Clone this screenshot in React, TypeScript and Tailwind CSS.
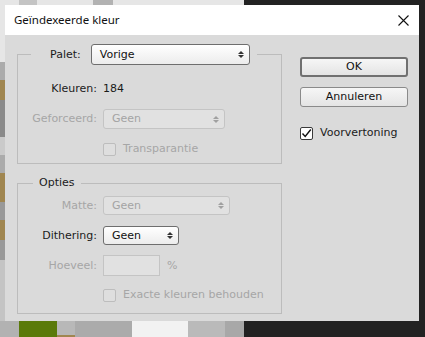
import React from "react";

const Arrows = ({ color }: { color: string }) => (
  <svg width="6" height="9" viewBox="0 0 6 9" className="shrink-0">
    <polygon points="0,4 3,1 6,4" fill={color} />
    <polygon points="0,5 3,8 6,5" fill={color} />
  </svg>
);

const Select = ({
  w,
  h,
  text,
  disabled,
}: {
  w: number;
  h: number;
  text: string;
  disabled?: boolean;
}) => (
  <div
    className={
      "flex items-center justify-between pl-[8px] pr-[5px] rounded-[3px] border " +
      (disabled
        ? "border-[#c4c4c4] bg-[#e1e1e1] text-[#a4a4a4]"
        : "border-[#6e6e6e] bg-gradient-to-b from-[#ffffff] to-[#ececec] text-[#111111]")
    }
    style={{ width: w, height: h }}
  >
    <span>{text}</span>
    <Arrows color={disabled ? "#a0a0a0" : "#333333"} />
  </div>
);

const Check = ({ checked, disabled }: { checked?: boolean; disabled?: boolean }) => (
  <div
    className={
      "w-[13px] h-[13px] rounded-[2px] border flex items-center justify-center shrink-0 " +
      (disabled ? "border-[#bdbdbd] bg-[#dedede]" : "border-[#3a3a3a] bg-white")
    }
  >
    {checked && (
      <svg width="11" height="11" viewBox="0 0 11 11">
        <polyline points="1.5,5.5 4.2,8.5 9.8,1.5" fill="none" stroke="#111" strokeWidth="1.4" />
      </svg>
    )}
  </div>
);

const Label = ({ children, disabled }: { children: React.ReactNode; disabled?: boolean }) => (
  <span className={"w-[79px] text-right shrink-0 " + (disabled ? "text-[#a6a6a6]" : "text-[#1a1a1a]")}>
    {children}
  </span>
);

export default function App() {
  return (
    <div className="relative w-[425px] h-[337px] overflow-hidden bg-[#e6e6e6]">
      <svg className="absolute inset-0" width="425" height="337" viewBox="0 0 425 337">
        <rect x="0" y="0" width="245" height="337" fill="#e6e6e6" />
        <rect x="244" y="0" width="181" height="337" fill="#222222" />
        <rect x="19" y="0" width="18" height="6" fill="#c4c4c4" />
        <rect x="93" y="0" width="20" height="6" fill="#b2b2b2" />
        <rect x="0" y="62" width="6" height="18" fill="#ababab" />
        <rect x="0" y="80" width="6" height="20" fill="#a08650" />
        <rect x="0" y="100" width="6" height="37" fill="#8a8a8a" />
        <rect x="0" y="137" width="6" height="18" fill="#cacaca" />
        <rect x="0" y="155" width="6" height="18" fill="#ababab" />
        <rect x="0" y="173" width="6" height="29" fill="#a08650" />
        <rect x="0" y="202" width="6" height="18" fill="#999999" />
        <rect x="0" y="220" width="6" height="20" fill="#a08650" />
        <rect x="0" y="240" width="6" height="20" fill="#999999" />
        <rect x="0" y="260" width="6" height="61" fill="#c4c4c4" />
        <rect x="0" y="321" width="19" height="16" fill="#b2b2b2" />
        <rect x="19" y="321" width="38" height="16" fill="#5a7a0a" />
        <rect x="57" y="321" width="18" height="16" fill="#b8b8b8" />
        <rect x="57" y="335" width="18" height="2" fill="#a08650" />
        <rect x="75" y="321" width="57" height="16" fill="#ababab" />
        <rect x="132" y="321" width="56" height="16" fill="#f2f2f2" />
        <rect x="188" y="321" width="37" height="16" fill="#bababa" />
        <rect x="225" y="321" width="19" height="16" fill="#a8a8a8" />
      </svg>

      <div
        className="absolute left-[5px] top-[5px] w-[414px] h-[316px] flex flex-col bg-[#dadada] text-[11px] leading-[16px] text-[#1a1a1a]"
        style={{ fontFamily: '"DejaVu Sans", sans-serif' }}
      >
        <div className="h-[30px] bg-white flex items-center justify-between pl-[9px] pr-[10px] shrink-0">
          <span className="text-[11.5px] text-[#111]" style={{ fontFamily: '"Noto Sans", sans-serif' }}>
            Geïndexeerde kleur
          </span>
          <svg width="11" height="11" viewBox="0 0 11 11">
            <path d="M0.5 0.5 L10.5 10.5 M10.5 0.5 L0.5 10.5" stroke="#111" strokeWidth="1.1" />
          </svg>
        </div>

        <div className="flex pl-[12px] pt-[9px] gap-[18px]">
          <div className="w-[265px] flex flex-col shrink-0">
            <fieldset className="border border-[#bcbcbc] pb-[6px]">
              <legend className="ml-[13px] pl-[19px] pr-[7px] flex items-center gap-[10px]">
                <span>Palet:</span>
                <Select w={159} h={21} text="Vorige" />
              </legend>
              <div className="flex items-center gap-[6px] mt-[16px]">
                <Label>Kleuren:</Label>
                <span>184</span>
              </div>
              <div className="flex items-center gap-[6px] mt-[12px]">
                <Label disabled>Geforceerd:</Label>
                <Select w={122} h={20} text="Geen" disabled />
              </div>
              <div className="flex items-center gap-[7px] mt-[12px] pl-[85px] text-[#a6a6a6]">
                <Check disabled />
                <span>Transparantie</span>
              </div>
            </fieldset>

            <fieldset className="border border-[#bcbcbc] pb-[10px] mt-[11px]">
              <legend className="ml-[15px] px-[6px]">Opties</legend>
              <div className="flex items-center gap-[6px] mt-[5px]">
                <Label disabled>Matte:</Label>
                <Select w={127} h={19} text="Geen" disabled />
              </div>
              <div className="flex items-center gap-[6px] mt-[11px]">
                <Label>Dithering:</Label>
                <Select w={76} h={19} text="Geen" />
              </div>
              <div className="flex items-center gap-[6px] mt-[10px]">
                <Label disabled>Hoeveel:</Label>
                <div className="w-[57px] h-[21px] border border-[#c4c4c4] bg-[#e1e1e1] shrink-0" />
                <span className="ml-[1px] text-[#a6a6a6]">%</span>
              </div>
              <div className="flex items-center gap-[7px] mt-[11px] pl-[85px] text-[#a6a6a6]">
                <Check disabled />
                <span>Exacte kleuren behouden</span>
              </div>
            </fieldset>
          </div>

          <div className="w-[108px] flex flex-col pt-[13px] shrink-0">
            <button className="h-[20px] rounded-[3px] border-2 border-[#707070] bg-gradient-to-b from-[#f6f6f6] to-[#e4e4e4] text-[#111] leading-[16px]">
              OK
            </button>
            <button className="h-[20px] mt-[10px] rounded-[3px] border border-[#8a8a8a] bg-gradient-to-b from-[#f6f6f6] to-[#e4e4e4] text-[#111] leading-[16px]">
              Annuleren
            </button>
            <div className="flex items-center gap-[7px] mt-[18px]">
              <Check checked />
              <span>Voorvertoning</span>
            </div>
          </div>
        </div>
      </div>
    </div>
  );
}
